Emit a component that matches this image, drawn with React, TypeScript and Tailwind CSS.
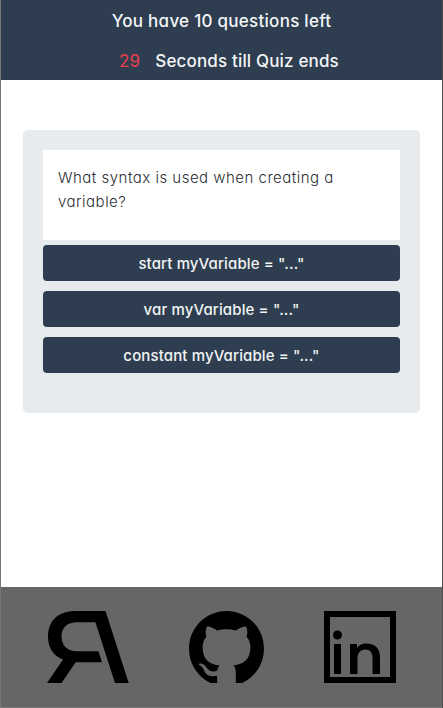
const textFont =
  "font-['Inter','Open_Sans',sans-serif] [font-feature-settings:'cv11'_1]";

const answers = [
  'start myVariable = "..."',
  'var myVariable = "..."',
  'constant myVariable = "..."',
];

function BrandMark() {
  return (
    <svg width="82" height="72" viewBox="0 0 82 72" aria-label="Home">
      <path d="M58.500 0H29C11 0 1 10 1 25.500C1 37 6.500 45 16 48.500L0 72H14.500L28.700 51.300H55L51.400 40.300H30C20.500 40.300 14.500 34.500 14.500 25.500C14.500 16.500 20.500 11.300 30 11.300H48.400L68 72H81.700Z" />
    </svg>
  );
}

function GithubMark() {
  return (
    <svg width="75" height="72" viewBox="0 0 97.700 93.800" aria-label="GitHub">
      <path
        fillRule="evenodd"
        clipRule="evenodd"
        d="M48.854 0C21.839 0 0 22 0 49.217c0 21.756 13.993 40.172 33.405 46.690 2.427.490 3.316-1.059 3.316-2.362 0-1.141-.080-5.052-.080-9.127-13.590 2.934-16.420-5.867-16.420-5.867-2.184-5.704-5.420-7.170-5.420-7.170-4.448-3.015.324-3.015.324-3.015 4.934.326 7.523 5.052 7.523 5.052 4.367 7.496 11.404 5.378 14.235 4.074.404-3.178 1.699-5.378 3.074-6.600-10.839-1.141-22.243-5.378-22.243-24.283 0-5.378 1.940-9.778 5.014-13.200-.485-1.222-2.184-6.275.486-13.038 0 0 4.125-1.304 13.426 5.052a46.970 46.970 0 0 1 12.214-1.630c4.125 0 8.330.571 12.213 1.630 9.302-6.356 13.427-5.052 13.427-5.052 2.670 6.763.970 11.816.485 13.038 3.155 3.422 5.015 7.822 5.015 13.200 0 18.905-11.404 23.060-22.324 24.283 1.780 1.548 3.316 4.481 3.316 9.126 0 6.600-.080 11.897-.080 13.526 0 1.304.890 2.853 3.316 2.364 19.412-6.520 33.405-24.935 33.405-46.691C97.707 22 75.788 0 48.854 0z"
      />
    </svg>
  );
}

function LinkedinMark() {
  return (
    <svg width="72" height="72" viewBox="0 0 72 72" aria-label="LinkedIn">
      <path fillRule="evenodd" d="M0 0H72V72H0ZM6 6V66H66V6Z" />
      <circle cx="13.500" cy="24" r="4.500" />
      <path d="M10 33H17V63H10Z" />
      <path d="M26 33H33V37C35 34 38 32.500 42 32.500C51 32.500 56 37.500 56 46V63H48.500V47C48.500 41.500 46 38.500 41.500 38.500C36.500 38.500 33.500 42 33.500 47V63H26Z" />
    </svg>
  );
}

export default function App() {
  return (
    <div
      className={`flex h-[708px] w-full flex-col border-x border-l-[#777777] border-r-[#4d4d4d] bg-white ${textFont}`}
    >
      <header className="h-20 bg-[#2e3e50] text-[17px] leading-[39px] font-medium text-[#f4f6f7]">
        <p className="pt-0.5 text-center leading-[38px] tracking-[0.27px]">
          You have 10 questions left
        </p>
        <p className="flex justify-center pl-[15px] pt-0.5 leading-[38px] tracking-[0.16px]">
          <span className="mr-[15px] font-normal text-[#ea3e4e]">29</span>
          <span>Seconds till Quiz ends</span>
        </p>
      </header>
      <main className="flex-1 px-[22px] pt-[50px]">
        <section className="h-[283px] rounded-[5px] bg-[#e7ebee] p-5">
          <div className="h-[90px] bg-white px-[15px] pt-4 text-[15px] leading-6 font-light tracking-[0.49px] text-[#2c2f34]">
            What syntax is used when creating a<br />
            variable?
          </div>
          <div className="mt-[5px] flex flex-col gap-2.5">
            {answers.map((answer) => (
              <button
                key={answer}
                className="h-9 rounded-[4px] bg-[#2e3e50] pt-0.5 text-[15px] font-medium tracking-[0.13px] text-[#f1f3f4]"
              >
                {answer}
              </button>
            ))}
          </div>
        </section>
      </main>
      <footer className="flex h-[121px] items-start border-b border-[#7c7979] bg-[#666666] pl-[46px] pt-6">
        <BrandMark />
        <div className="ml-[60px]">
          <GithubMark />
        </div>
        <div className="ml-[60px]">
          <LinkedinMark />
        </div>
      </footer>
    </div>
  );
}
